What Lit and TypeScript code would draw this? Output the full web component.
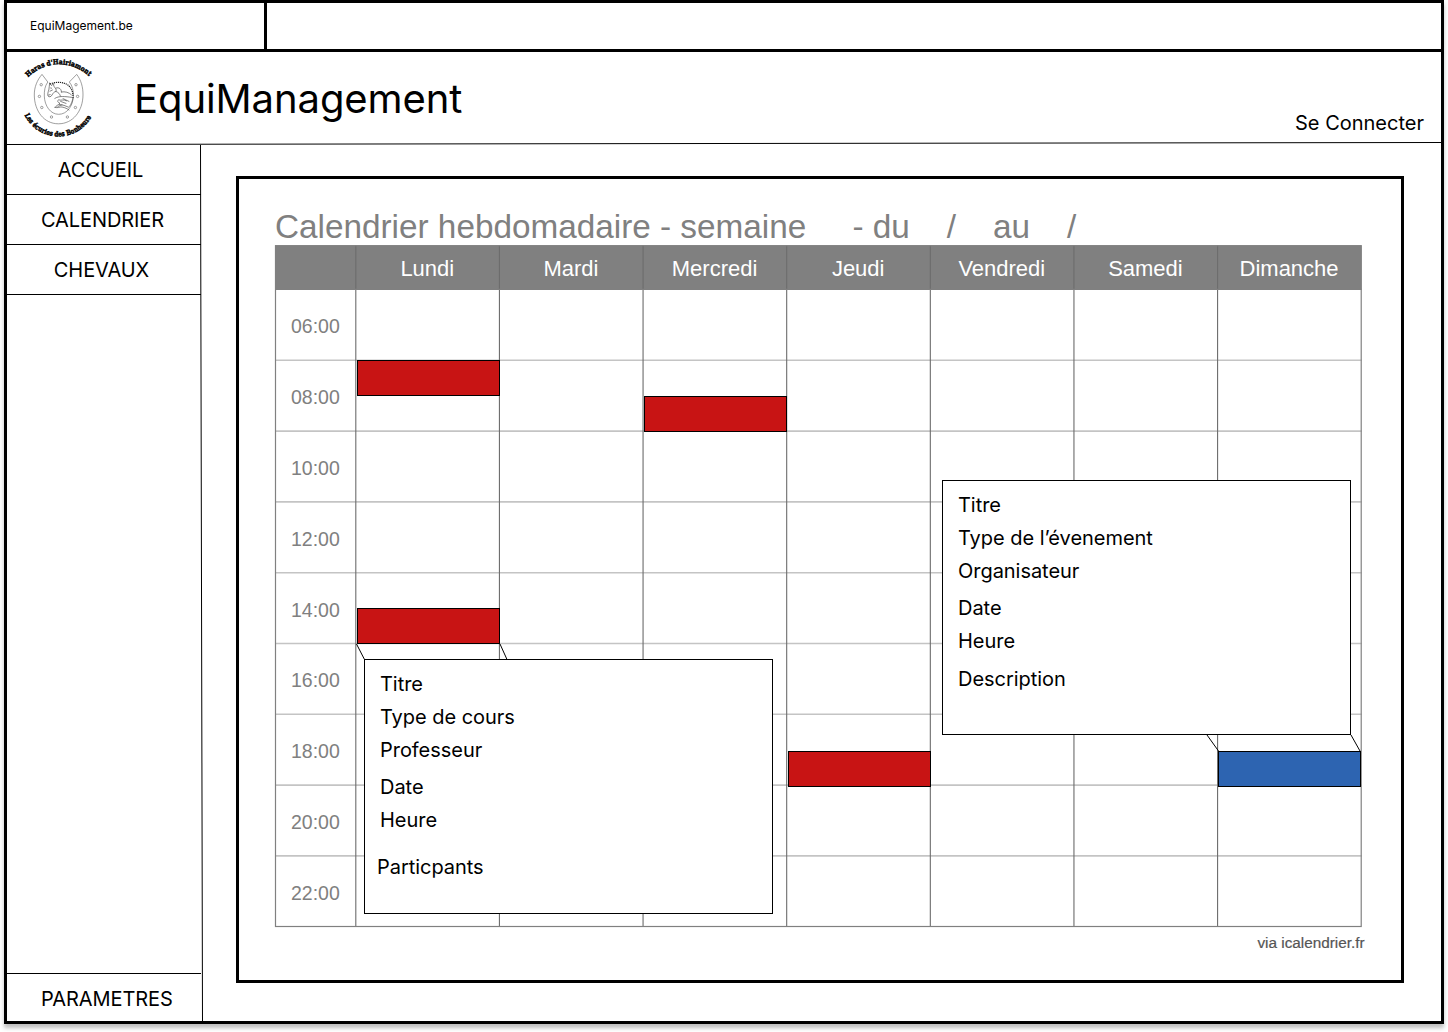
import { LitElement, html, svg, css } from "lit";
import { customElement } from "lit/decorators.js";
import { styleMap } from "lit/directives/style-map.js";

const DAYS = ["Lundi", "Mardi", "Mercredi", "Jeudi", "Vendredi", "Samedi", "Dimanche"];
const HOURS = ["06:00", "08:00", "10:00", "12:00", "14:00", "16:00", "18:00", "20:00", "22:00"];

/* Board geometry, in pixels from the top left corner of the week table. */
const FIRST_COL = 80.7;
const COL = 143.63;
const HEAD = 44.2;
const ROW = 70.8;
const WIDTH = FIRST_COL + COL * 7;
const HEIGHT = HEAD + ROW * 9;

interface Slot {
  x: number;
  y: number;
  kind: "course" | "event";
}

const SLOTS: Slot[] = [
  { x: 82, y: 115, kind: "course" },
  { x: 369, y: 151, kind: "course" },
  { x: 82, y: 363, kind: "course" },
  { x: 513, y: 506, kind: "course" },
  { x: 943, y: 506, kind: "event" },
];

@customElement("haras-logo")
export class HarasLogo extends LitElement {
  static styles = css`
    :host {
      display: block;
      width: 84px;
      height: 92px;
    }
    svg {
      display: block;
    }
    .motto {
      font-family: "DejaVu Serif", serif;
      font-weight: 700;
      fill: #000;
      stroke: #000;
      stroke-width: 0.5;
    }
    .line {
      fill: none;
      stroke: #6a6a6a;
      stroke-width: 0.65;
    }
    .dark {
      fill: none;
      stroke: #444;
      stroke-width: 0.65;
      stroke-linecap: round;
    }
    .mane {
      fill: none;
      stroke: #222;
      stroke-width: 1.2;
      stroke-dasharray: 1.2 0.8;
    }
  `;

  private holes = [
    [41.2, 84.7], [39.4, 96.4], [41.8, 107.5], [51.5, 117],
    [67.4, 117], [75.4, 107.5], [77.6, 96.4], [76, 84.7],
  ];

  render() {
    return html`
      <svg width="84" height="92" viewBox="16 52 84 92">
        <defs>
          <path id="over" d="M28.2 77.4 A43 43 0 0 1 89.4 76.8" />
          <path id="under" d="M24.6 115 A37.5 37.5 0 0 0 92.2 115.4" />
        </defs>
        <text class="motto" font-size="7">
          <textPath href="#over" textLength="67.5" lengthAdjust="spacingAndGlyphs">Haras d'Hairiamont</textPath>
        </text>
        <text class="motto" font-size="7">
          <textPath href="#under" textLength="82" lengthAdjust="spacingAndGlyphs">Les écuries des Bonheure</textPath>
        </text>
        <path
          class="line"
          d="M42 74.4 L47.8 82 C44.8 86 44.2 91 44.3 96 C44.6 106 50.5 114.3 58.7 114.3 C67 114.3 73 106 73.4 96 C73.6 90 72.2 85.5 69.3 82 L76.7 74.4 C81 80 83.1 87 83 95 C82.8 111 73 123.8 58.4 123.8 C44 123.8 34.4 111 34.3 95 C34.2 87 37.2 80 42 74.4 Z"
        />
        ${this.holes.map(([x, y]) => svg`<circle class="line" cx=${x} cy=${y} r="1.2" />`)}
        <path class="mane" d="M50 84 C57 81.2 65 82 69 86 C72 89 73.2 93 73 98" />
        <path
          class="dark"
          d="M49.6 83.2 L51.6 85.6 L53.6 83.6 L53.8 86.4 C56 88 56.6 90 56 91.4 C54 91.8 53.2 93 52 95 C51 97 49 97.4 48 96 C47.4 94.6 48 92 48.8 90 C49.2 87.6 49.4 85.6 49.6 83.2 Z M50.6 88 L51.6 88.2 M50 91.2 L52.4 90 M48.6 95 L50.2 94.6"
        />
        <path
          class="dark"
          d="M56 88 C59 87 61.6 89 61.4 92 M56 91.4 C58.6 92.6 60 94 60.4 96 M61.4 92 C65 91.2 69 92.4 71.4 94.8 M54.8 98.4 C59 95.6 65 96.4 72 97.4 M55 107.4 C58 108.4 59.6 106.6 62 107 C65 107.6 67.6 108.8 69 110 M55 107.4 C56.4 105.4 58.4 105 60 103.2 C57.6 102.6 57 100.8 58.6 99.8 C61 100.8 63.6 99 66.6 100.8 M59.4 104.4 L64 105.4 L68.6 107.2 M60.6 101.4 L66 103.4 M58 106.4 L62 104.8 M63 98.6 L69 101.4 M73 98 C72.4 101 71.4 104 69.6 106.4"
        />
      </svg>
    `;
  }
}

@customElement("week-board")
export class WeekBoard extends LitElement {
  static styles = css`
    :host {
      display: block;
      font-family: "Liberation Sans", Arial, sans-serif;
      color: #808080;
    }
    .title {
      margin: 0;
      height: 36px;
      padding-top: 2px;
      line-height: 38px;
      font-size: 33.3px;
      font-weight: 400;
      white-space: pre;
    }
    .board {
      position: relative;
      width: 1087px;
      height: 682px;
      margin-top: 1px;
    }
    .table {
      position: relative;
      display: grid;
      grid-template-columns: 80.7px repeat(7, 143.63px);
      grid-template-rows: 44.4px repeat(9, 70.8px);
    }
    .day {
      display: flex;
      align-items: center;
      justify-content: center;
      padding: 3px 0.4px 0 0;
      font-size: 22px;
      color: #fff;
    }
    .hour {
      display: flex;
      align-items: center;
      justify-content: center;
      padding-top: 3.2px;
      font-size: 19.5px;
    }
    .lines {
      position: absolute;
      left: 0;
      top: 0;
      overflow: visible;
    }
    .headband {
      fill: #808080;
    }
    .row {
      stroke: #c4c4c4;
      stroke-width: 1.6;
    }
    .col {
      stroke: #6c6c6c;
      stroke-width: 1.1;
    }
    .edge {
      fill: none;
      stroke: #808080;
      stroke-width: 1.2;
    }
    .slot {
      position: absolute;
      box-sizing: border-box;
      width: 143px;
      height: 36px;
      border: 1px solid #000;
    }
    .course {
      background: #c81414;
    }
    .event {
      background: #2d64b1;
    }
    .links {
      position: absolute;
      left: 0;
      top: 0;
      stroke: #000;
      stroke-width: 1;
      overflow: visible;
    }
    .card {
      position: absolute;
      box-sizing: border-box;
      width: 409px;
      height: 255px;
      padding: 12px 15px;
      border: 1px solid #000;
      background: #fff;
      color: #000;
      font-family: Inter, sans-serif;
      font-size: 20px;
      line-height: 24px;
      letter-spacing: -0.04px;
      display: flex;
      flex-direction: column;
      gap: 9px;
    }
    .card-course {
      left: 89px;
      top: 414px;
    }
    .card-event {
      left: 667px;
      top: 235px;
    }
    .when {
      margin-top: 4px;
    }
    .about {
      margin-top: 5px;
    }
    .people {
      margin: 14px 0 0 -3px;
    }
    .credit {
      width: 1089.6px;
      padding-top: 7px;
      text-align: right;
      font-size: 15.3px;
      line-height: 18px;
      color: #555;
      -webkit-text-stroke: 0.2px #555;
    }
  `;

  private renderLines() {
    const x0 = 0.5;
    const y0 = 0.4;
    return html`
      <svg class="lines" width="1087" height="682">
        <rect class="headband" x="0" y="0.4" width="1086.6" height="44.4" />
        ${HOURS.slice(1).map((_, i) => {
          const y = y0 + HEAD + ROW * (i + 1) - 0.1;
          return svg`<line class="row" x1=${x0} x2=${x0 + WIDTH} y1=${y} y2=${y} />`;
        })}
        ${DAYS.map((_, i) => {
          const x = x0 + FIRST_COL + COL * i - 0.4;
          return svg`<line class="col" x1=${x} x2=${x} y1=${y0} y2=${y0 + HEIGHT} />`;
        })}
        <rect class="edge" x=${x0} y=${y0 + 0.3} width=${WIDTH - 0.4} height=${HEIGHT - 0.6} />
        <line class="edge" x1="0" x2="1086.6" y1="44.4" y2="44.4" />
      </svg>
    `;
  }

  render() {
    return html`
      <h2 class="title">Calendrier hebdomadaire - semaine     - du    /    au    /</h2>
      <div class="board">
        ${this.renderLines()}
        <div class="table">
          <span></span>
          ${DAYS.map((d) => html`<div class="day">${d}</div>`)}
          ${HOURS.map((h) => html`<div class="hour">${h}</div>${DAYS.map(() => html`<span></span>`)}`)}
        </div>
        ${SLOTS.map(
          (s) => html`<div class="slot ${s.kind}" style=${styleMap({ left: `${s.x}px`, top: `${s.y}px` })}></div>`
        )}
        <svg class="links" width="1087" height="682">
          <path d="M81.5 399 L89.5 414.5 M225 399 L232 414.5 M932 490 L943.5 506 M1076 490 L1085 506" />
        </svg>
        <div class="card card-course">
          <div>Titre</div>
          <div>Type de cours</div>
          <div>Professeur</div>
          <div class="when">Date</div>
          <div>Heure</div>
          <div class="people">Particpants</div>
        </div>
        <div class="card card-event">
          <div>Titre</div>
          <div>Type de l’évenement</div>
          <div>Organisateur</div>
          <div class="when">Date</div>
          <div>Heure</div>
          <div class="about">Description</div>
        </div>
      </div>
      <div class="credit">via icalendrier.fr</div>
    `;
  }
}

@customElement("app-root")
export class AppRoot extends LitElement {
  static styles = css`
    :host {
      display: block;
      height: 1032px;
      overflow: hidden;
      background: #fff;
      color: #000;
      font-family: Inter, sans-serif;
      font-size: 20px;
      line-height: 24px;
    }
    .frame {
      position: relative;
      box-sizing: border-box;
      width: 1440px;
      height: 1024px;
      margin: 0 4px;
      border: 3px solid #000;
      box-shadow: 0 4px 4px rgba(0, 0, 0, 0.25);
      display: flex;
      flex-direction: column;
    }
    .tabs {
      box-sizing: border-box;
      height: 49px;
      border-bottom: 3px solid #000;
      display: flex;
    }
    .tab {
      box-sizing: border-box;
      width: 260px;
      padding: 15px 0 0 23px;
      border-right: 3px solid #000;
      font-size: 12px;
      line-height: 15px;
    }
    .header {
      height: 92px;
      display: flex;
      justify-content: space-between;
    }
    .brand {
      display: flex;
      padding-left: 9px;
    }
    .name {
      margin: 0;
      padding: 23px 0 0 34px;
      font-size: 40px;
      line-height: 48px;
      font-weight: 400;
      letter-spacing: -0.08px;
    }
    .login {
      padding: 59px 17px 0 0;
    }
    .body {
      flex: 1;
      display: flex;
    }
    .side {
      width: 194px;
      display: flex;
      flex-direction: column;
      padding-top: 1px;
      letter-spacing: -0.08px;
    }
    .item {
      box-sizing: border-box;
      height: 50px;
      padding-top: 13px;
      border-bottom: 1px solid #000;
      text-align: center;
    }
    .item-home {
      padding-right: 7px;
    }
    .item-cal {
      padding-right: 3px;
    }
    .item-horses {
      padding-right: 5px;
    }
    .settings {
      box-sizing: border-box;
      height: 48px;
      margin-top: auto;
      padding: 13px 0 0 34px;
      border-top: 1px solid #000;
    }
    .panel {
      box-sizing: border-box;
      width: 1168px;
      height: 807px;
      margin: 32px 0 0 35px;
      padding: 27px 36px 0;
      border: 3px solid #000;
    }
    .rules {
      position: absolute;
      left: 0;
      top: 0;
      stroke: #000;
      stroke-width: 1;
    }
  `;

  render() {
    return html`
      <div class="frame">
        <div class="tabs"><div class="tab">EquiMagement.be</div></div>
        <header class="header">
          <div class="brand">
            <haras-logo></haras-logo>
            <h1 class="name">EquiManagement</h1>
          </div>
          <div class="login">Se Connecter</div>
        </header>
        <div class="body">
          <nav class="side">
            <div class="item item-home">ACCUEIL</div>
            <div class="item item-cal">CALENDRIER</div>
            <div class="item item-horses">CHEVAUX</div>
            <div class="settings">PARAMETRES</div>
          </nav>
          <main class="panel"><week-board></week-board></main>
        </div>
        <svg class="rules" width="1434" height="1018">
          <path d="M0 141.5 L1434 139.5 M193.5 142 L195.5 1018" />
        </svg>
      </div>
    `;
  }
}
